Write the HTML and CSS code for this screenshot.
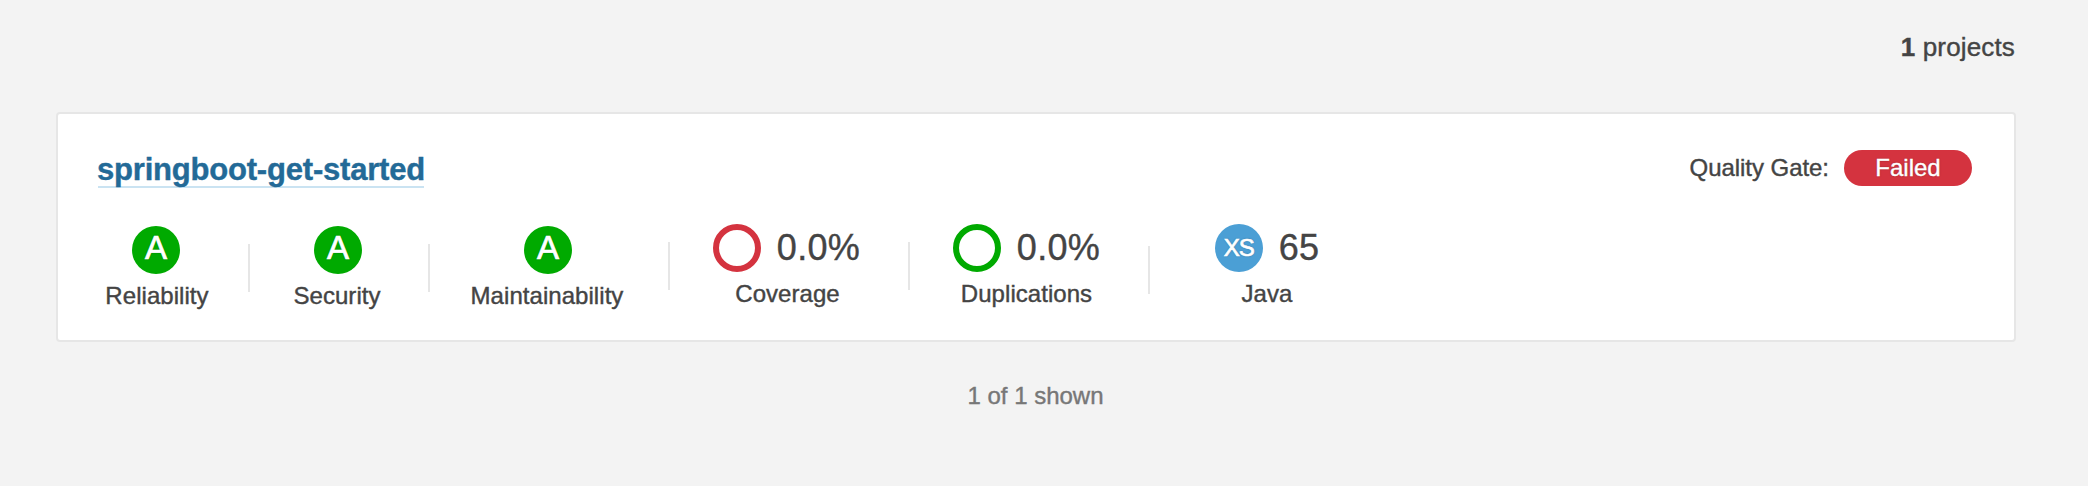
FILE: index.html
```html
<!DOCTYPE html>
<html lang="en">
<head>
<meta charset="utf-8">
<title>Projects</title>
<link rel="stylesheet" href="styles.css">
</head>
<body>
<main class="page">
  <header class="page-header"><strong>1</strong> projects</header>
  <article class="card">
    <div class="card-header">
      <h2 class="name"><a class="name-link" href="#">springboot-get-started</a></h2>
      <div class="gate"><span class="gate-label">Quality Gate:</span><span class="level">Failed</span></div>
    </div>
    <div class="measures">
      <div class="measure reliability rated">
        <div class="value"><span class="circle rating">A</span></div>
        <div class="label">Reliability</div>
      </div>
      <i class="divider"></i>
      <div class="measure security rated">
        <div class="value"><span class="circle rating">A</span></div>
        <div class="label">Security</div>
      </div>
      <i class="divider"></i>
      <div class="measure maintainability rated">
        <div class="value"><span class="circle rating">A</span></div>
        <div class="label">Maintainability</div>
      </div>
      <i class="divider high"></i>
      <div class="measure coverage">
        <div class="value"><span class="circle ring red"></span><span class="number">0.0%</span></div>
        <div class="label">Coverage</div>
      </div>
      <i class="divider high"></i>
      <div class="measure duplications">
        <div class="value"><span class="circle ring green"></span><span class="number">0.0%</span></div>
        <div class="label">Duplications</div>
      </div>
      <i class="divider low"></i>
      <div class="measure size">
        <div class="value"><span class="circle size-rating">XS</span><span class="number">65</span></div>
        <div class="label">Java</div>
      </div>
    </div>
  </article>
  <footer class="page-footer">1 of 1 shown</footer>
</main>
</body>
</html>
```

FILE: styles.css
```css
* { box-sizing: border-box; }
body {
  margin: 0;
  background: #f3f3f3;
  color: #444;
  font-family: "Liberation Sans", Arial, Helvetica, sans-serif;
  font-size: 24px;
  line-height: 32px;
  -webkit-text-stroke: 0.4px;
}
.page { height: 486px; padding: 31px 73px 0 56px; }
.page-header {
  height: 81px;
  text-align: right;
  font-size: 26px;
  letter-spacing: 0.15px;
}
.card {
  width: 1960px;
  height: 230px;
  padding: 36px 42px 0 40px;
  background: #fff;
  border: 2px solid #e6e6e6;
  border-radius: 4px;
}
.card-header {
  display: flex;
  justify-content: space-between;
  height: 74px;
}
.name { margin: 0; font-size: 31px; line-height: 39px; letter-spacing: -0.2px; }
.name-link {
  display: block;
  width: 326px;
  height: 38px;
  color: #236a97;
  text-decoration: none;
  text-indent: -1px;
  white-space: nowrap;
  border-bottom: 2px solid #cae3f2;
}
.gate { display: flex; height: 36px; line-height: 36px; }
.gate-label { margin-right: 15px; letter-spacing: -0.05px; }
.level {
  width: 128px;
  border-radius: 18px;
  background: #d4333f;
  color: #fff;
  text-align: center;
  text-shadow: 0 0 2px rgba(0, 0, 0, 0.35);
}
.measures { display: flex; }
.measure { display: flex; flex-direction: column; align-items: center; }
.measure.rated { padding-top: 2px; }
.reliability { width: 150px; padding-right: 34px; }
.security { width: 178px; padding-right: 2px; }
.maintainability { width: 238px; padding-right: 2px; }
.coverage, .duplications { width: 238px; padding-right: 5px; }
.size { width: 234px; }
.value { display: flex; align-items: center; height: 48px; }
.label { margin-top: 6px; letter-spacing: 0.05px; }
.reliability .label, .coverage .label { margin-left: 2px; }
.security .label, .maintainability .label { margin-right: 2px; }
.divider { width: 2px; height: 48px; margin-top: 20px; background: #e6e6e6; }
.divider.high { margin-top: 18px; }
.divider.low { margin-top: 22px; }
.circle {
  width: 48px;
  height: 48px;
  border-radius: 50%;
  color: #fff;
  text-align: center;
}
.rating {
  background: #0a0;
  font-size: 33px;
  line-height: 44px;
  -webkit-text-stroke: 0.7px;
  text-shadow: 0 0 2px rgba(0, 0, 0, 0.35);
}
.ring { border: 6px solid; }
.red { border-color: #d4333f; }
.green { border-color: #0a0; }
.size-rating {
  background: #4b9fd5;
  line-height: 47px;
  letter-spacing: -1px;
  -webkit-text-stroke: 0.7px;
  text-shadow: 0 0 2px rgba(0, 0, 0, 0.35);
}
.number { margin-left: 16px; font-size: 36px; line-height: 48px; letter-spacing: 0.3px; }
.page-footer { margin-top: 38px; text-align: center; color: #777; }
```
